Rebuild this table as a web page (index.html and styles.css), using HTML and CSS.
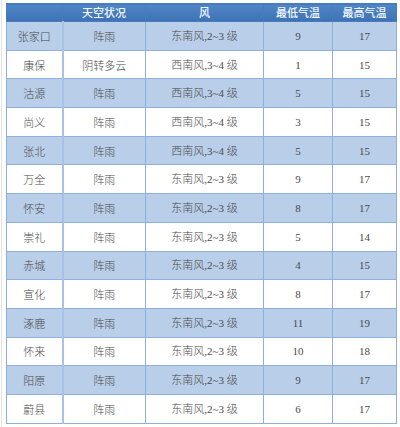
FILE: index.html
```html
<!DOCTYPE html>
<html lang="zh">
<head>
<meta charset="utf-8">
<link rel="stylesheet" href="styles.css">
</head>
<body>
<div class="frame">
<table class="wx">
  <colgroup>
    <col class="c1"><col class="c2"><col class="c3"><col class="c4"><col class="c5">
  </colgroup>
  <thead>
    <tr><th></th><th>天空状况</th><th>风</th><th>最低气温</th><th>最高气温</th></tr>
  </thead>
  <tbody>
    <tr><td>张家口</td><td>阵雨</td><td>东南风,2~3 级</td><td>9</td><td>17</td></tr>
    <tr><td>康保</td><td>阴转多云</td><td>西南风,3~4 级</td><td>1</td><td>15</td></tr>
    <tr><td>沽源</td><td>阵雨</td><td>西南风,3~4 级</td><td>5</td><td>15</td></tr>
    <tr><td>尚义</td><td>阵雨</td><td>西南风,3~4 级</td><td>3</td><td>15</td></tr>
    <tr><td>张北</td><td>阵雨</td><td>西南风,3~4 级</td><td>5</td><td>15</td></tr>
    <tr><td>万全</td><td>阵雨</td><td>东南风,2~3 级</td><td>9</td><td>17</td></tr>
    <tr><td>怀安</td><td>阵雨</td><td>东南风,2~3 级</td><td>8</td><td>17</td></tr>
    <tr><td>崇礼</td><td>阵雨</td><td>东南风,2~3 级</td><td>5</td><td>14</td></tr>
    <tr><td>赤城</td><td>阵雨</td><td>东南风,2~3 级</td><td>4</td><td>15</td></tr>
    <tr><td>宣化</td><td>阵雨</td><td>东南风,2~3 级</td><td>8</td><td>17</td></tr>
    <tr><td>涿鹿</td><td>阵雨</td><td>东南风,2~3 级</td><td>11</td><td>19</td></tr>
    <tr><td>怀来</td><td>阵雨</td><td>东南风,2~3 级</td><td>10</td><td>18</td></tr>
    <tr><td>阳原</td><td>阵雨</td><td>东南风,2~3 级</td><td>9</td><td>17</td></tr>
    <tr><td>蔚县</td><td>阵雨</td><td>东南风,2~3 级</td><td>6</td><td>17</td></tr>
  </tbody>
</table>
</div>
</body>
</html>
```

FILE: styles.css
```css
html, body {
  margin: 0;
  padding: 0;
  background: #ffffff;
}

.frame {
  width: 396px;
  height: 427px;
  box-sizing: border-box;
  padding: 3px 0 0 6px;
  border-left: 1px solid #e4e4e4;
  margin-left: 1px;
}

.wx {
  border-collapse: collapse;
  table-layout: fixed;
  width: 390px;
  margin-left: -2px;
  font-family: "Liberation Serif", "Noto Sans CJK SC", serif;
  font-size: 11px;
  color: #4a4a4a;
}

.c1 { width: 56px; }
.c2 { width: 83px; }
.c3 { width: 118px; }
.c4 { width: 69px; }
.c5 { width: 64px; }

.wx th {
  height: 17px;
  padding: 0;
  background: linear-gradient(#4f86c6, #3e72b6);
  color: #f4f8fc;
  font-family: "Noto Sans CJK SC", sans-serif;
  font-weight: 500;
  font-size: 11px;
  line-height: 17px;
  text-align: center;
  border: 1px solid #4a7cbc;
}

.wx td {
  height: 27.7px;
  padding: 0;
  text-align: center;
  vertical-align: middle;
  border: 1px solid #8fb0da;
  line-height: 14px;
  font-weight: 300;
}

.wx td:first-child,
.wx td:nth-child(2) {
  font-family: "Noto Sans CJK SC", sans-serif;
}

.wx td:first-child {
  border-right: 2px solid #a9c2e3;
}

.wx tbody tr:nth-child(odd) td {
  background: #b9cee8;
}

.wx tbody tr:nth-child(even) td {
  background: #ffffff;
}
```
